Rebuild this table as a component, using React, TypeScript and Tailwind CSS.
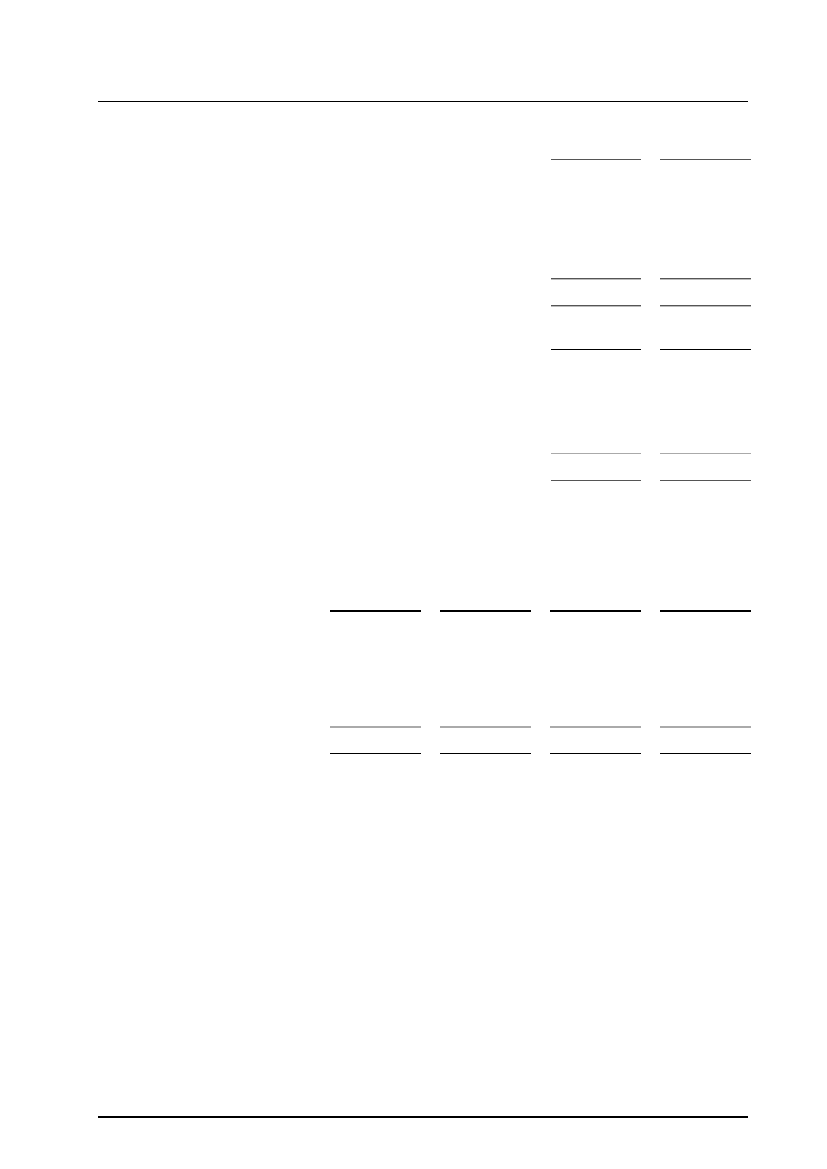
import React from "react";

function Pair({ cls, mt }: { cls: string; mt: string }) {
  return (
    <div className={`flex gap-[19px] ml-[453px] ${mt}`}>
      <div className={`w-[90px] shrink-0 ${cls}`} />
      <div className={`w-[91px] shrink-0 ${cls}`} />
    </div>
  );
}

function Quad({ cls, mt }: { cls: string; mt: string }) {
  return (
    <div className={`flex gap-[19px] ml-[232px] ${mt}`}>
      <div className={`w-[91px] shrink-0 ${cls}`} />
      <div className={`w-[91px] shrink-0 ${cls}`} />
      <div className={`w-[91px] shrink-0 ${cls}`} />
      <div className={`w-[91px] shrink-0 ${cls}`} />
    </div>
  );
}

export default function App() {
  return (
    <div className="w-[827px] h-[1169px] bg-white overflow-hidden font-['Liberation_Sans',sans-serif]">
      <div className="pt-[101px] pl-[98px] w-[748px]">
        <div className="h-px bg-black w-[650px]" />
        <Pair mt="mt-[57px]" cls="h-px bg-[#555555]" />
        <Pair mt="mt-[118px]" cls="h-[2px] border-t border-t-[#555555] border-b border-b-[#bbbbbb]" />
        <Pair mt="mt-[25px]" cls="h-[2px] border-t border-t-[#555555] border-b border-b-[#bbbbbb]" />
        <Pair mt="mt-[42px]" cls="h-px bg-black" />
        <Pair mt="mt-[103px]" cls="h-px bg-[#aaaaaa]" />
        <Pair mt="mt-[26px]" cls="h-px bg-[#555555]" />
        <Quad mt="mt-[129px]" cls="h-[2px] bg-black" />
        <Quad mt="mt-[114px]" cls="h-[2px] bg-[#aaaaaa]" />
        <Quad mt="mt-[25px]" cls="h-px bg-black" />
        <div className="mt-[362px] h-[2px] bg-black w-[650px]" />
      </div>
    </div>
  );
}
